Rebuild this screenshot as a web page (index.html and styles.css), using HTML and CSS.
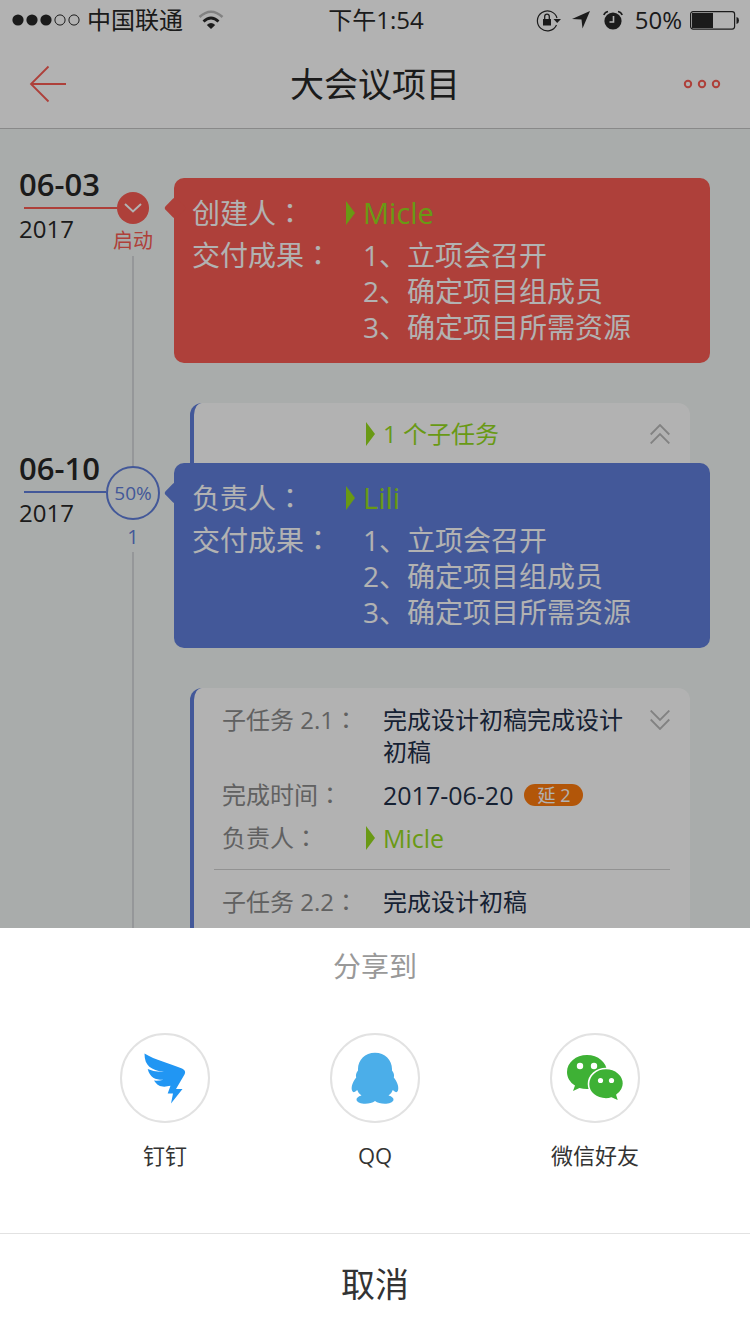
FILE: index.html
```html
<!DOCTYPE html>
<html lang="zh-CN">
<head>
<meta charset="utf-8">
<meta name="viewport" content="width=device-width, initial-scale=1">
<title>大会议项目</title>
<link rel="stylesheet" href="styles.css">
</head>
<body>
<div class="app">
  <div class="status">
    <div class="status-side">
      <svg class="signal" width="68" height="14" viewBox="0 0 68 14"><g fill="#282828"><circle cx="6" cy="7" r="5.6"/><circle cx="20" cy="7" r="5.6"/><circle cx="34" cy="7" r="5.6"/></g><g fill="none" stroke="#282828"><circle cx="48" cy="7" r="5.1"/><circle cx="62" cy="7" r="5.1"/></g></svg>
      <span>中国联通</span>
      <svg class="wifi" width="26" height="20" viewBox="0 0 26 20"><path d="M1.500 7Q13-3.500 24.500 7" fill="none" stroke="#bbb" stroke-width="2.600"/><path d="M5.500 11.500Q13 4.500 20.500 11.500" fill="none" stroke="#282828" stroke-width="2.800"/><path d="M8.800 15Q13 11 17.200 15L13 19Z" fill="#282828"/></svg>
    </div>
    <time class="clock">下午1:54</time>
    <div class="status-side status-right">
      <svg width="26" height="24" viewBox="0 0 26 24"><path d="M20.500 17A10 10 0 1 1 21 10" fill="none" stroke="#282828" stroke-width="1.200"/><path d="M17.500 11H25L21.200 15Z" fill="#282828"/><rect x="7" y="11" width="8" height="6.500" fill="#282828"/><path d="M8.700 11V8.500a2.300 2.300 0 0 1 4.600 0V11" fill="none" stroke="#282828" stroke-width="1.300"/></svg>
      <svg class="locate" width="18" height="18" viewBox="0 0 18 18"><path d="M18 0 10.500 17.500 9.500 8.500 0 8Z" fill="#282828"/></svg>
      <svg class="alarm" width="20" height="20" viewBox="0 0 20 20"><circle cx="10" cy="11" r="8.600" fill="#282828"/><path d="M.8 5Q2 2 5 1.500M19.200 5Q18 2 15 1.500" fill="none" stroke="#282828" stroke-width="1.600"/><path d="M10.500 6V12H6.500" fill="none" stroke="#fff" stroke-width="1.600"/></svg>
      <span>50%</span>
      <svg class="battery" width="50" height="20" viewBox="0 0 50 20"><rect x=".6" y="1.600" width="44" height="17.500" rx="2.500" fill="none" stroke="#282828" stroke-width="1.200"/><rect x="2" y="3" width="21" height="15" fill="#282828"/><path d="M46.500 7Q49 7.500 49 10.400T46.500 14Z" fill="#282828"/></svg>
    </div>
  </div>
  <header class="nav">
    <button class="nav-btn" type="button" aria-label="返回"><svg width="38" height="38" viewBox="0 0 38 38"><path d="M37 19H2M19.500 1.500 2 19 19.500 36.500" fill="none" stroke="currentColor" stroke-width="1.800"/></svg></button>
    <h1>大会议项目</h1>
    <button class="nav-btn" type="button" aria-label="更多"><svg width="38" height="10" viewBox="0 0 38 10"><g fill="none" stroke="currentColor" stroke-width="2"><circle cx="5" cy="5" r="3.200"/><circle cx="19" cy="5" r="3.200"/><circle cx="33" cy="5" r="3.200"/></g></svg></button>
  </header>

  <main class="timeline">
    <section class="item item-start">
      <div class="when">
        <div class="date"><strong>06-03</strong><i class="rule"></i><span>2017</span></div>
        <div class="track">
          <i class="lead"></i>
          <div class="node"><span class="dot"><svg width="18" height="10" viewBox="0 0 18 10"><path d="M1 1 9 8.500 17 1" fill="none" stroke="#fff" stroke-width="2"/></svg></span></div>
          <span class="stage">启动</span>
          <i class="rail"></i>
        </div>
      </div>
      <div class="detail">
        <article class="card">
          <div class="row"><span class="label">创建人<b lang="zh-TW">：</b></span><a class="person" href="#">Micle</a></div>
          <div class="row"><span class="label">交付成果<b lang="zh-TW">：</b></span><div>1、立项会召开<br>2、确定项目组成员<br>3、确定项目所需资源</div></div>
        </article>
      </div>
    </section>

    <section class="item item-progress">
      <div class="when">
        <div class="date"><strong>06-10</strong><i class="rule"></i><span>2017</span></div>
        <div class="track">
          <i class="lead"></i>
          <div class="node"><span class="dot">50%</span></div>
          <span class="stage">1</span>
          <i class="rail"></i>
        </div>
      </div>
      <div class="detail">
        <div class="panel panel-head">
          <a class="person" href="#">1 个子任务</a>
          <button class="fold" type="button" aria-label="收起"><svg width="20" height="20" viewBox="0 0 20 20"><path d="M.7 10.500 10 1 19.300 10.500M.7 19.500 10 10 19.300 19.500" fill="none" stroke="currentColor" stroke-width="1.800"/></svg></button>
        </div>
        <article class="card">
          <div class="row"><span class="label">负责人<b lang="zh-TW">：</b></span><a class="person" href="#">Lili</a></div>
          <div class="row"><span class="label">交付成果<b lang="zh-TW">：</b></span><div>1、立项会召开<br>2、确定项目组成员<br>3、确定项目所需资源</div></div>
        </article>
        <div class="panel panel-list">
          <div class="task">
            <div class="field"><span class="label">子任务 2.1<b lang="zh-TW">：</b></span><span class="value">完成设计初稿完成设计初稿</span><button class="fold" type="button" aria-label="展开"><svg width="20" height="20" viewBox="0 0 20 20"><path d="M.7 .5 10 10 19.300 .5M.7 9.500 10 19 19.300 9.500" fill="none" stroke="currentColor" stroke-width="1.800"/></svg></button></div>
            <div class="field"><span class="label">完成时间<b lang="zh-TW">：</b></span><span class="value latin">2017-06-20 <em class="late">延 2</em></span></div>
            <div class="field"><span class="label">负责人<b lang="zh-TW">：</b></span><a class="person latin" href="#">Micle</a></div>
          </div>
          <div class="task">
            <div class="field"><span class="label">子任务 2.2<b lang="zh-TW">：</b></span><span class="value">完成设计初稿</span></div>
          </div>
        </div>
      </div>
    </section>
  </main>
</div>

<div class="scrim">
  <div class="sheet" role="dialog" aria-labelledby="share-title">
    <h2 id="share-title">分享到</h2>
    <div class="targets">
      <button class="target" type="button">
        <span class="ring"><svg width="60" height="60" viewBox="0 0 60 60"><path d="M9.500 5.500C20 12 35 15.500 47 20.500Q51.500 22.500 49.500 26.500L41 41H47.500L36 55.500 38 45.500H32.700L35.500 37.800C28 39.500 23 39 19 32.500Q23 33 28.500 31.800C21 32 15 30 12.700 21Q20 24.500 29 24C16 22 9.500 18 9.500 5.500Z" fill="#2196f3"/></svg></span>
        <span>钉钉</span>
      </button>
      <button class="target" type="button">
        <span class="ring"><svg width="60" height="60" viewBox="0 0 60 60"><path d="M30 4.700C40 4.700 47 12 47 21V22.500Q49.800 26 48.800 29.500C52.500 34 54 39 53 42.500Q51.500 46 47.800 42Q47 45 43.500 47.500 48.800 49 48.500 52C47.500 56.500 35 57 30 53C25 57 12.500 56.500 11.500 52Q11.200 49 16.500 47.500 13 45 12.200 42 8.500 46 7 42.500C6 39 7.500 34 11.200 29.500Q10.200 26 13 22.500V21C13 12 20 4.700 30 4.700Z" fill="#4baee9"/></svg></span>
        <span>QQ</span>
      </button>
      <button class="target" type="button">
        <span class="ring"><svg width="60" height="60" viewBox="0 0 60 60"><path d="M22 7C33 7 42 14.500 42 24S33 41 22 41Q18 41 14.500 40L8 43 10 37.500C5 34.500 2 29.500 2 24 2 14.500 11 7 22 7Z" fill="#3eb135"/><path d="M41 20.500C50.500 20.500 58.500 27 58.500 35.500Q58.500 42 52 47L54 53.500 46.500 50Q44 51 41 51C31 51 23.500 44.500 23.500 36S31 20.500 41 20.500Z" fill="#3eb135" stroke="#fff" stroke-width="1.600"/><g fill="#fff"><circle cx="15" cy="18" r="3.200"/><circle cx="29" cy="18" r="3.200"/><circle cx="35.500" cy="32.500" r="2.600"/><circle cx="46.500" cy="32.500" r="2.600"/></g></svg></span>
        <span>微信好友</span>
      </button>
    </div>
    <button class="cancel" type="button">取消</button>
  </div>
</div>
</body>
</html>
```
FILE: styles.css
```css
* { box-sizing: border-box; }

:root {
  --red: #f95c53;
  --blue: #617fdb;
  --green: #97dc1e;
  --ink: #282828;
  --navy: #1f304a;
}

body {
  margin: 0;
  color: var(--ink);
  font: 24px/32px "Open Sans", "Noto Sans CJK SC", sans-serif;
}

button {
  padding: 0;
  border: 0;
  background: none;
  color: inherit;
  font: inherit;
}

a { text-decoration: none; }
svg { display: block; flex: none; }
b { font-weight: 400; font-family: "Noto Sans CJK TC", sans-serif; line-height: 1; }

.app {
  display: flex;
  flex-direction: column;
  height: 100vh;
  overflow: hidden;
  background: #f3f7f5;
}

/* Status bar */
.status {
  display: flex;
  flex: none;
  align-items: center;
  height: 40px;
  padding: 0 10px 0 12px;
  background: #fff;
}
.status-side { display: flex; flex: 1 1 0; align-items: center; }
.status-right { justify-content: flex-end; }
.signal { margin-right: 7px; }
.wifi { margin-left: 15px; }
.locate { margin-left: 10px; }
.alarm { margin: 0 12px 0 13px; }
.battery { margin-left: 8px; }

/* Title bar */
.nav {
  display: flex;
  flex: none;
  align-items: center;
  justify-content: space-between;
  height: 89px;
  padding: 0 29px;
  border-bottom: 1px solid #c4c4c4;
  background: #fff;
}
.nav h1 { margin: 0; font-size: 34px; line-height: 48px; font-weight: 400; }
.nav-btn { color: var(--red); }

/* Timeline */
.timeline { display: flex; flex-direction: column; }
.item { display: flex; }
.item-start { --tone: var(--red); }
.item-progress { --tone: var(--blue); }
.when { display: flex; flex: none; width: 174px; padding-left: 19px; }
.date { display: flex; flex-direction: column; width: 87px; padding-top: 35px; }
.item-progress .date { padding-top: 45px; }
.date strong { font-size: 31px; line-height: 40px; font-weight: 600; }
.date span { line-height: 28px; }
.rule { height: 2px; margin: 3px 0 6px 5px; background: var(--tone); }

.track { display: flex; flex-direction: column; align-items: center; width: 54px; }
.lead { width: 2px; height: 63px; background: #d6d8dc; }
.item-start .lead { visibility: hidden; }
.node { display: flex; align-items: center; width: 100%; }
.node::before, .node::after { content: ""; flex: 1; height: 2px; }
.node::before { background: var(--tone); }
.dot {
  display: flex;
  align-items: center;
  justify-content: center;
  width: 32px;
  height: 32px;
  border-radius: 50%;
  background: var(--tone);
}
.item-progress .dot {
  width: 54px;
  height: 54px;
  border: 2px solid var(--tone);
  background: none;
  color: var(--tone);
  font-size: 19px;
}
.stage { margin: 4px 0 2px; color: var(--tone); font-size: 20px; line-height: 26px; }
.rail { flex: 1; width: 2px; background: #d6d8dc; }

.detail { flex: 1; padding: 0 40px 40px 0; }
.item-start .detail { padding-top: 49px; }

.card {
  position: relative;
  display: flex;
  flex-direction: column;
  gap: 6px;
  padding: 17px 18px 18px;
  border-radius: 10px;
  background: var(--tone);
  color: #fff;
  font-size: 28px;
  line-height: 36px;
}
.card::before {
  content: "";
  position: absolute;
  top: 22px;
  left: -7px;
  width: 16px;
  height: 16px;
  border-radius: 3px;
  background: inherit;
  transform: rotate(45deg);
}
.row { display: flex; }
.row .label { flex: none; width: 171px; }
.row .person { font-size: 29px; }

.person { display: flex; align-items: center; gap: 8px; margin-left: -17px; color: var(--green); }
.person::before {
  content: "";
  border-style: solid;
  border-width: 12px 0 12px 9px;
  border-color: transparent transparent transparent currentColor;
}

/* Subtask panels */
.panel {
  margin: 0 20px 0 16px;
  padding: 0 20px;
  border-left: 4px solid var(--blue);
  border-radius: 12px;
  background: #fff;
}
.panel-head {
  display: flex;
  align-items: center;
  justify-content: space-between;
  height: 60px;
  padding-top: 2px;
  padding-left: 189px;
  border-radius: 12px 12px 0 0;
}
.panel-list { margin-top: 40px; padding-bottom: 24px; }
.fold { color: #bbb; }
.task { display: flex; flex-direction: column; gap: 11px; padding: 16px 0 15px 8px; }
.task + .task { border-top: 1px solid #d2d2d2; }
.field { display: flex; }
.field .label { flex: none; width: 161px; color: #8c8c8c; }
.field .value { flex: 1; color: var(--navy); }
.field .fold { align-self: flex-start; margin: 6px 0 0 23px; }
.latin { font-size: 25px; }
.field .value.latin { display: flex; align-items: center; gap: 11px; }
.late {
  padding: 0 13px;
  border-radius: 11px;
  background: #ff7c0e;
  color: #fff;
  font-size: 18px;
  line-height: 22px;
  font-style: normal;
}

/* Share sheet */
.scrim {
  position: fixed;
  inset: 0;
  display: flex;
  flex-direction: column;
  justify-content: flex-end;
  background: rgba(0, 0, 0, .3);
}
.sheet { background: #fff; }
.sheet h2 {
  margin: 0;
  padding: 18px 0 47px;
  color: #999;
  font-size: 28px;
  line-height: 40px;
  font-weight: 400;
  text-align: center;
}
.targets {
  display: grid;
  grid-template-columns: 21fr 21fr 23fr;
  padding: 0 40px 62px 60px;
}
.target {
  display: flex;
  flex-direction: column;
  align-items: center;
  gap: 16px;
  color: #333;
  font-size: 22px;
}
.ring {
  display: flex;
  align-items: center;
  justify-content: center;
  width: 90px;
  height: 90px;
  border: 2px solid #e2e2e2;
  border-radius: 50%;
}
.cancel {
  width: 100%;
  height: 101px;
  border-top: 1px solid #e2e2e2;
  color: #333;
  font-size: 34px;
}
```
